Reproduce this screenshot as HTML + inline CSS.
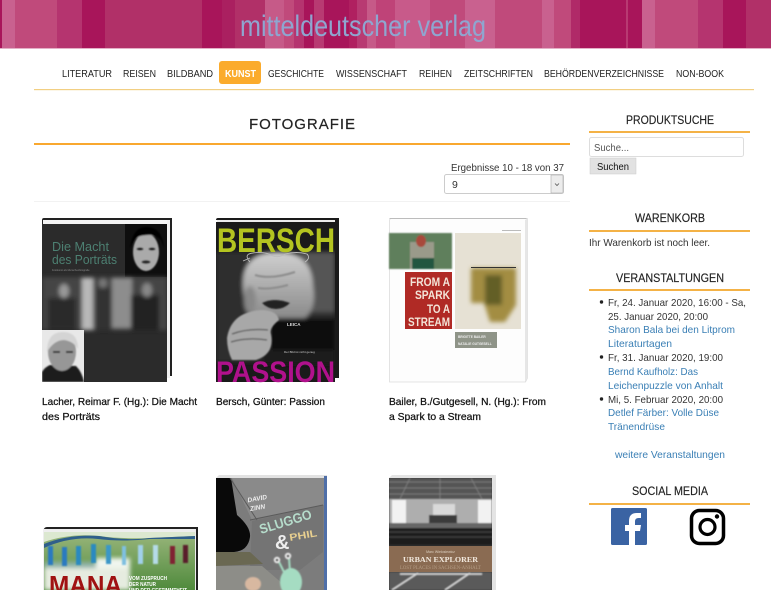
<!DOCTYPE html>
<html lang="de"><head><meta charset="utf-8"><title>Fotografie</title>
<style>
html,body{margin:0;padding:0;background:#fff;width:771px;height:590px;overflow:hidden}
svg{display:block;font-family:"Liberation Sans",sans-serif}
.n{font-size:10.5px;fill:#222}
.h{font-size:11.5px;fill:#222;stroke:#222;stroke-width:.15}
.t{font-size:10.5px;fill:#111;stroke:#111;stroke-width:.25}
.s{font-size:10.5px;fill:#333}
.b{font-size:10.5px;fill:#3a7fb5}
</style></head><body>
<svg width="771" height="590" viewBox="0 0 771 590" xmlns="http://www.w3.org/2000/svg">
<defs>
<filter id="bl" x="-10%" y="-10%" width="120%" height="120%"><feGaussianBlur stdDeviation="2"/></filter>
<filter id="bs" x="-10%" y="-10%" width="120%" height="120%"><feGaussianBlur stdDeviation="0.7"/></filter>
<linearGradient id="gm" x1="0" y1="0" x2="0" y2="1"><stop offset="0" stop-color="#9ab67c"/><stop offset="1" stop-color="#4f8a3c"/></linearGradient>
<linearGradient id="gh" x1="0" y1="0" x2="0" y2="1"><stop offset="0" stop-color="#d0d0d0"/><stop offset="1" stop-color="#8a8a8a"/></linearGradient>
<clipPath id="c1"><rect x="42" y="224" width="125" height="158"/></clipPath>
<clipPath id="c2"><rect x="216" y="222" width="119" height="160"/></clipPath>
<clipPath id="c4"><rect x="44" y="532" width="151" height="58"/></clipPath>
<clipPath id="c5"><rect x="216" y="478" width="108" height="112"/></clipPath>
<clipPath id="c6"><rect x="389" y="478" width="103" height="112"/></clipPath>
</defs>
<!-- header stripes -->
<rect width="771" height="48" fill="#b13068"/>
<g>
<rect x="0" width="2" height="48" fill="#a8155a"/><rect x="2" width="13" height="48" fill="#c9618f"/><rect x="15" width="42" height="48" fill="#c04a7b"/><rect x="57" width="25" height="48" fill="#b5346f"/><rect x="82" width="23" height="48" fill="#a8155a"/><rect x="202" width="20" height="48" fill="#a8155a"/><rect x="222" width="13" height="48" fill="#aa2060"/>
<rect x="265" width="19" height="48" fill="#c65a88"/><rect x="284" width="10" height="48" fill="#c04a7b"/><rect x="294" width="10" height="48" fill="#b5346f"/><rect x="304" width="10" height="48" fill="#a8155a"/><rect x="314" width="10" height="48" fill="#b83a72"/><rect x="324" width="25" height="48" fill="#a8155a"/><rect x="349" width="8" height="48" fill="#b02060"/><rect x="357" width="10" height="48" fill="#b83a72"/><rect x="367" width="9" height="48" fill="#c65a88"/><rect x="376" width="19" height="48" fill="#bf4378"/><rect x="395" width="35" height="48" fill="#c85a8a"/><rect x="430" width="35" height="48" fill="#c04a7b"/><rect x="465" width="30" height="48" fill="#c9618f"/><rect x="495" width="47" height="48" fill="#c04a7b"/>
<rect x="542" width="12" height="48" fill="#c9618f"/><rect x="554" width="17" height="48" fill="#c04a7b"/><rect x="571" width="9" height="48" fill="#b02a68"/><rect x="580" width="46" height="48" fill="#a8155a"/><rect x="626" width="2" height="48" fill="#b83a72"/><rect x="628" width="14" height="48" fill="#a8155a"/><rect x="642" width="13" height="48" fill="#c9618f"/><rect x="655" width="43" height="48" fill="#c04a7b"/><rect x="698" width="25" height="48" fill="#b5346f"/><rect x="723" width="23" height="48" fill="#a8155a"/><rect x="746" width="25" height="48" fill="#b13068"/>
</g>
<rect y="48" width="771" height="1" fill="#e3b0c6"/>
<text x="240" y="36" font-size="30" fill="#8ea6d0" textLength="246" lengthAdjust="spacingAndGlyphs">mitteldeutscher verlag</text>
<!-- nav -->
<rect x="219" y="61" width="42" height="23" rx="3" fill="#fbab2c"/>
<text class="n" x="62" y="77" textLength="50" lengthAdjust="spacingAndGlyphs">LITERATUR</text>
<text class="n" x="123" y="77" textLength="33" lengthAdjust="spacingAndGlyphs">REISEN</text>
<text class="n" x="167" y="77" textLength="46" lengthAdjust="spacingAndGlyphs">BILDBAND</text>
<text class="n" x="225" y="77" textLength="31" lengthAdjust="spacingAndGlyphs" style="fill:#fff;font-weight:bold">KUNST</text>
<text class="n" x="268" y="77" textLength="56" lengthAdjust="spacingAndGlyphs">GESCHICHTE</text>
<text class="n" x="336" y="77" textLength="71" lengthAdjust="spacingAndGlyphs">WISSENSCHAFT</text>
<text class="n" x="419" y="77" textLength="33" lengthAdjust="spacingAndGlyphs">REIHEN</text>
<text class="n" x="464" y="77" textLength="69" lengthAdjust="spacingAndGlyphs">ZEITSCHRIFTEN</text>
<text class="n" x="544" y="77" textLength="120" lengthAdjust="spacingAndGlyphs">BEHÖRDENVERZEICHNISSE</text>
<text class="n" x="676" y="77" textLength="48" lengthAdjust="spacingAndGlyphs">NON-BOOK</text>
<rect x="34" y="89" width="720" height="1.200" fill="#f2cf82"/>
<!-- main heading -->
<text x="249" y="129" font-size="15" fill="#222" stroke="#222" stroke-width=".2" textLength="106" lengthAdjust="spacing">FOTOGRAFIE</text>
<rect x="34" y="143" width="536" height="2" fill="#f9a82f"/>
<text class="s" x="451" y="171" textLength="113" lengthAdjust="spacingAndGlyphs">Ergebnisse 10 - 18 von 37</text>
<rect x="444.500" y="174.500" width="119" height="19" rx="2" fill="#fff" stroke="#ccc"/>
<rect x="551" y="175" width="12" height="18" fill="#ececec" stroke="#aaa" stroke-width=".6"/>
<path d="M555 183.500l2 2 2-2" fill="none" stroke="#555" stroke-width=".8"/>
<text class="s" x="452" y="188">9</text>
<rect x="34" y="201" width="536" height="1" fill="#f2f2f2"/>

<!-- book 1 -->
<g>
<path d="M42 224V220q0-2 2-2H172V376H170V220H44V224z" fill="#222"/>
<rect x="43" y="220" width="127" height="4" fill="#f4f4f4"/>
<rect x="167" y="220" width="3" height="158" fill="#efefef"/>
<rect x="42" y="224" width="125" height="158" fill="#2b2b2b"/>
<g clip-path="url(#c1)">
<rect x="125" y="224" width="42" height="53" fill="#0e0e0e"/>
<g filter="url(#bs)"><ellipse cx="146" cy="252" rx="13" ry="19" fill="#aaa"/><path d="M130 248q3-22 17-21 15 0 17 21l-3-8q-6-6-13-5-10 0-14 5z" fill="#050505"/><ellipse cx="140" cy="249" rx="3.500" ry="1.500" fill="#111"/><ellipse cx="152" cy="249" rx="3.500" ry="1.500" fill="#111"/><ellipse cx="146" cy="262" rx="4.500" ry="1.800" fill="#222"/></g>
<g filter="url(#bl)"><rect x="42" y="277" width="125" height="53" fill="#444"/><rect x="82" y="278" width="11" height="52" fill="#b8b8b8"/><rect x="112" y="278" width="20" height="50" fill="#8d8d8d"/><rect x="48" y="298" width="28" height="32" fill="#2c2c2c"/><ellipse cx="64" cy="291" rx="5" ry="7" fill="#999"/><rect x="97" y="288" width="14" height="42" fill="#333"/><ellipse cx="103" cy="283" rx="4" ry="5" fill="#777"/><rect x="131" y="295" width="28" height="35" fill="#222"/><ellipse cx="147" cy="290" rx="5" ry="7" fill="#888"/></g>
<rect x="42" y="330" width="42" height="52" fill="#e8e8e8"/>
<g filter="url(#bs)"><path d="M42 382V372q3-5 8-7l26 1q6 6 8 16z" fill="#1c1c1c"/><ellipse cx="62" cy="352" rx="14" ry="19" fill="#979797"/><path d="M47 352q0-20 16-20 15 0 15 17-5-8-14-9-10 0-17 12z" fill="#d4d4d4"/><rect x="53" y="351" width="7" height="2" fill="#333"/><rect x="66" y="351" width="7" height="2" fill="#333"/></g>
</g>
<text x="52" y="251" font-size="13" fill="#4d8072" textLength="57" lengthAdjust="spacingAndGlyphs">Die Macht</text>
<text x="52" y="264" font-size="13" fill="#4d8072" textLength="65" lengthAdjust="spacingAndGlyphs">des Porträts</text>
<text x="52" y="271" font-size="2.500" fill="#888">Fotokunst als Menschenfotografie</text>
</g>
<text class="t" x="42" y="405" textLength="155" lengthAdjust="spacingAndGlyphs">Lacher, Reimar F. (Hg.): Die Macht</text>
<text class="t" x="42" y="420" textLength="58" lengthAdjust="spacingAndGlyphs">des Porträts</text>

<!-- book 2 -->
<g>
<path d="M216 222V220q0-2 2-2H339V378H335V220H216z" fill="#1a1a1a"/>
<rect x="217" y="220" width="118" height="3" fill="#ececec"/>
<rect x="216" y="222" width="119" height="160" fill="#1a1a1a"/>
<g clip-path="url(#c2)">
<g filter="url(#bl)"><rect x="216" y="252" width="119" height="110" fill="#2e2e2e"/><rect x="300" y="252" width="35" height="60" fill="#555"/><path d="M243 285q-1-32 35-33 34 1 35 34 4 22-8 32H255q-12-10-12-33z" fill="url(#gh)"/><ellipse cx="250" cy="300" rx="6" ry="14" fill="#888"/><rect x="270" y="318" width="65" height="32" fill="#0c0c0c"/><rect x="262" y="350" width="73" height="14" fill="#1c1c1c"/></g>
<g filter="url(#bs)"><path d="M227 338q4-26 34-28 16 0 18 10-10 8-8 14 4 20-15 26h-24q-5-10-5-22z" fill="#a8a8a8"/><path d="M262 303q12-6 28 0-6 6-14 6-8 0-14-6z" fill="#222"/><path d="M232 334q16-6 36-4M231 342q16-5 36-2" stroke="#555" stroke-width="1.300" fill="none"/><path d="M255 275q16 5 40-3M258 288q12 2 30-3" stroke="#8c8c8c" stroke-width="2" fill="none"/></g>
<path d="M250 262q-7-8 3-9 12-2 20 3 6 2 12-2 12-3 22 0 4 4-2 8M250 258l-7 3" fill="none" stroke="#bbb" stroke-width=".9"/>
</g>
<text x="287" y="326" font-size="4.500" fill="#ddd" font-weight="bold">LEICA</text>
<text x="284" y="353" font-size="3" fill="#ccc">Der Bild ist nicht genug</text>
<text x="217" y="252" font-size="34" font-weight="bold" fill="#b4c420" textLength="118" lengthAdjust="spacingAndGlyphs">BERSCH</text>
<text x="216" y="382" font-size="30" font-weight="bold" fill="#b0118c" textLength="119" lengthAdjust="spacingAndGlyphs">PASSION</text>
</g>
<text class="t" x="216" y="405" textLength="109" lengthAdjust="spacingAndGlyphs">Bersch, Günter: Passion</text>

<!-- book 3 -->
<g>
<path d="M389.500 220l1-1.500H527.500V378l-2 4H389.500z" fill="#fdfdfd" stroke="#dcdcdc" stroke-width=".8"/>
<path d="M525 220l2.500-1.500V378l-2.500 4z" fill="#e6e6e6"/>
<rect x="389.500" y="218" width="137" height="1" fill="#bcbcbc"/>
<rect x="502" y="230" width="19" height="1" fill="#bbb"/>
<g filter="url(#bs)"><rect x="389" y="233" width="63" height="36" fill="#5f7f5c"/><rect x="410" y="242" width="24" height="27" fill="#9a9a8a"/><ellipse cx="421" cy="241" rx="5" ry="6" fill="#a84a3a"/><rect x="412" y="258" width="22" height="11" fill="#21573f"/></g>
<rect x="455" y="233" width="66" height="96" fill="#e6e1d4"/>
<g filter="url(#bl)"><path d="M471 268H516V305L505 322H490L484 303H471z" fill="#a38d42"/><rect x="485" y="275" width="17" height="30" fill="#635e28"/></g>
<rect x="471" y="267" width="45" height="1" fill="#333"/>
<rect x="405" y="272" width="47" height="57" fill="#b02a25"/>
<g font-size="12" font-weight="bold" fill="#f3e4d8">
<text x="410" y="286" textLength="40" lengthAdjust="spacingAndGlyphs">FROM A</text><text x="415" y="299" textLength="35" lengthAdjust="spacingAndGlyphs">SPARK</text><text x="427" y="313" textLength="23" lengthAdjust="spacingAndGlyphs">TO A</text><text x="408" y="326" textLength="42" lengthAdjust="spacingAndGlyphs">STREAM</text></g>
<rect x="455" y="332" width="42" height="16" fill="#8f9488"/>
<text x="458" y="338" font-size="3.200" fill="#eee" font-weight="bold">BRIGITTE BAILER</text>
<text x="458" y="345" font-size="3.200" fill="#eee" font-weight="bold">NATALIE GUTGESELL</text>
</g>
<text class="t" x="389" y="405" textLength="157" lengthAdjust="spacingAndGlyphs">Bailer, B./Gutgesell, N. (Hg.): From</text>
<text class="t" x="389" y="420" textLength="92" lengthAdjust="spacingAndGlyphs">a Spark to a Stream</text>

<!-- book 4 -->
<g>
<path d="M43 531q1-4 4-4H198V590H196V529H47z" fill="#222"/>
<rect x="43" y="529" width="153" height="61" fill="#eee"/>
<rect x="44" y="532" width="151" height="58" fill="url(#gm)"/>
<g clip-path="url(#c4)">
<path d="M44 532H195V536L150 538q-30 1-50-2-30-3-56 6z" fill="#dce8d0"/>
<path d="M44 544q25-10 55-8 30 5 50 2l46-2v3H150q-28 3-52 0-28-3-54 9z" fill="#2f5f8a"/>
<g filter="url(#bl)"><rect x="44" y="562" width="60" height="28" fill="#8fb2a8"/><rect x="96" y="558" width="34" height="32" fill="#f0f5ee"/><rect x="44" y="568" width="85" height="22" fill="#e6ece0"/></g>
<g filter="url(#bs)"><rect x="48" y="546" width="5" height="19" fill="#2c7ac0"/><rect x="62" y="547" width="5" height="19" fill="#2c7ac0"/><rect x="76" y="546" width="5" height="19" fill="#2c8ac0"/><rect x="91" y="544" width="5" height="19" fill="#2c8ac0"/><rect x="106" y="545" width="5" height="19" fill="#3a97c7"/><rect x="122" y="546" width="4" height="19" fill="#7fc0e0"/><rect x="138" y="545" width="5" height="19" fill="#a0d0ea"/><rect x="153" y="545" width="5" height="19" fill="#b5dbe8"/><rect x="170" y="546" width="5" height="18" fill="#802030"/><rect x="183" y="545" width="5" height="18" fill="#5a1c2a"/></g>
<text x="49" y="594" font-size="26" font-weight="bold" fill="#a01212" textLength="73" lengthAdjust="spacingAndGlyphs">MANA</text>
<g font-size="5" fill="#fff" font-weight="bold"><text x="129" y="580" textLength="38" lengthAdjust="spacingAndGlyphs">VOM ZUSPRUCH</text><text x="129" y="586" textLength="27" lengthAdjust="spacingAndGlyphs">DER NATUR</text><text x="129" y="592" textLength="58" lengthAdjust="spacingAndGlyphs">UND DER GESTIMMTHEIT</text></g>
</g>
</g>

<!-- book 5 -->
<g>
<path d="M216 478l3-3H327V590H216z" fill="#e2e2e2"/>
<rect x="324" y="476" width="3" height="114" fill="#4f6fa8"/>
<rect x="216" y="478" width="108" height="112" fill="#7c7c7c"/>
<g clip-path="url(#c5)">
<path d="M232 478H324V505L252 520z" fill="#8a8a8a"/>
<path d="M252 521L323 505V552L300 570H250z" fill="#747474"/>
<path d="M216 478H231L237 515q14 12 13 22-2 14-16 15h-18z" fill="#090909"/>
<path d="M230 478L257 520M250 520L323 505" stroke="#5b5b5b" stroke-width="1" fill="none"/>
<path d="M216 552H250L263 564 216 566z" fill="#6a6852"/>
<path d="M216 566H262L290 590H216z" fill="#8d8d88"/>
<g transform="rotate(-10 250 503)" font-size="6.500" fill="#eee" font-weight="bold" font-style="italic"><text x="248" y="502">DAVID</text><text x="249" y="511">ZINN</text></g>
<text x="0" y="0" font-size="13.500" font-weight="bold" fill="#b6dccb" transform="translate(261 534) rotate(-17)" textLength="54" lengthAdjust="spacingAndGlyphs">SLUGGO</text>
<text x="275" y="549" font-size="20" font-weight="bold" fill="#eee">&amp;</text>
<text x="0" y="0" font-size="10" font-weight="bold" fill="#e8cf8f" transform="translate(290 541) rotate(-10)" textLength="28" lengthAdjust="spacingAndGlyphs">PHIL</text>
<g filter="url(#bs)"><ellipse cx="291" cy="582" rx="11" ry="14" fill="#a5dcc2"/><path d="M279 562l6 12M289 558l1 14" stroke="#a5dcc2" stroke-width="2"/><circle cx="277" cy="560" r="3.200" fill="#eee"/><circle cx="288" cy="556" r="3.200" fill="#eee"/><circle cx="277" cy="560" r="1.300" fill="#222"/><circle cx="288" cy="556" r="1.300" fill="#222"/><ellipse cx="253" cy="584" rx="8" ry="7" fill="#d8b8a0"/></g>
</g>
</g>

<!-- book 6 -->
<g>
<path d="M389 478l3-3H496V590H389z" fill="#e4e4e4"/>
<rect x="389" y="478" width="103" height="112" fill="#333"/>
<g clip-path="url(#c6)" filter="url(#bs)">
<rect x="389" y="478" width="103" height="21" fill="#555"/>
<path d="M389 482H492M389 488H492M389 494H492M410 478L400 499M471 478L482 499M440 478V499" stroke="#888" stroke-width=".7"/>
<rect x="389" y="499" width="103" height="26" fill="#aeaeae"/>
<rect x="392" y="500" width="14" height="25" fill="#f2f2f2"/><rect x="478" y="500" width="14" height="25" fill="#f2f2f2"/>
<rect x="433" y="504" width="22" height="11" fill="#d9d9d9"/><rect x="429" y="515" width="28" height="8" fill="#3a3a3a"/>
<rect x="389" y="523" width="103" height="5" fill="#666"/>
<rect x="389" y="528" width="103" height="17" fill="#1c1c1c"/>
<path d="M389 532H492M389 537H492" stroke="#555" stroke-width=".8"/>
<rect x="389" y="572" width="103" height="18" fill="#5a5a5a"/><path d="M392 590L418 573M445 590L470 573M400 574H482" stroke="#ddd" stroke-width="1.500"/>
</g>
<rect x="389" y="546" width="103" height="26" fill="#8a6b52"/>
<text x="440.500" y="553" font-size="3.500" fill="#dcd0c0" text-anchor="middle">Marc Wielosiewicz</text>
<text x="403" y="562" font-size="7.500" font-weight="bold" fill="#f2e9de" font-family="Liberation Serif" textLength="75" lengthAdjust="spacingAndGlyphs">URBAN EXPLORER</text>
<text x="400" y="569" font-size="5" fill="#b49c84" font-family="Liberation Serif" textLength="81" lengthAdjust="spacingAndGlyphs">LOST PLACES IN SACHSEN-ANHALT</text>
</g>

<!-- sidebar -->
<text class="h" x="626" y="124" textLength="88" lengthAdjust="spacingAndGlyphs">PRODUKTSUCHE</text>
<rect x="589" y="131" width="161" height="2" fill="#f4b246"/>
<rect x="589.500" y="137.500" width="154" height="19" rx="2" fill="#fff" stroke="#ddd"/>
<text class="s" x="594" y="151" style="fill:#555" textLength="35" lengthAdjust="spacingAndGlyphs">Suche...</text>
<rect x="590" y="158" width="46" height="16" fill="#e2e2e2" stroke="#ccc" stroke-width=".5"/>
<text class="s" x="597" y="170" style="fill:#111" textLength="32" lengthAdjust="spacingAndGlyphs">Suchen</text>

<text class="h" x="635" y="222" textLength="70" lengthAdjust="spacingAndGlyphs">WARENKORB</text>
<rect x="589" y="230" width="161" height="2" fill="#f4b246"/>
<text class="s" x="589" y="246" textLength="121" lengthAdjust="spacingAndGlyphs">Ihr Warenkorb ist noch leer.</text>

<text class="h" x="616" y="282" textLength="108" lengthAdjust="spacingAndGlyphs">VERANSTALTUNGEN</text>
<rect x="589" y="289" width="161" height="2" fill="#f4b246"/>
<circle cx="601.500" cy="302" r="1.700" fill="#222"/><circle cx="601.500" cy="357" r="1.700" fill="#222"/><circle cx="601.500" cy="399" r="1.700" fill="#222"/>
<text class="s" x="608" y="306" textLength="138" lengthAdjust="spacingAndGlyphs">Fr, 24. Januar 2020, 16:00 - Sa,</text>
<text class="s" x="608" y="320" textLength="100" lengthAdjust="spacingAndGlyphs">25. Januar 2020, 20:00</text>
<text class="b" x="608" y="333" textLength="127" lengthAdjust="spacingAndGlyphs">Sharon Bala bei den Litprom</text>
<text class="b" x="608" y="347" textLength="64" lengthAdjust="spacingAndGlyphs">Literaturtagen</text>
<text class="s" x="608" y="361" textLength="115" lengthAdjust="spacingAndGlyphs">Fr, 31. Januar 2020, 19:00</text>
<text class="b" x="608" y="375" textLength="90" lengthAdjust="spacingAndGlyphs">Bernd Kaufholz: Das</text>
<text class="b" x="608" y="389" textLength="115" lengthAdjust="spacingAndGlyphs">Leichenpuzzle von Anhalt</text>
<text class="s" x="608" y="403" textLength="115" lengthAdjust="spacingAndGlyphs">Mi, 5. Februar 2020, 20:00</text>
<text class="b" x="608" y="416" textLength="111" lengthAdjust="spacingAndGlyphs">Detlef Färber: Volle Düse</text>
<text class="b" x="608" y="430" textLength="57" lengthAdjust="spacingAndGlyphs">Tränendrüse</text>
<text class="b" x="615" y="458" textLength="110" lengthAdjust="spacingAndGlyphs">weitere Veranstaltungen</text>

<text class="h" x="632" y="495" textLength="76" lengthAdjust="spacingAndGlyphs">SOCIAL MEDIA</text>
<rect x="589" y="503" width="161" height="2" fill="#f4b246"/>
<rect x="611" y="508" width="36" height="37" rx="1.500" fill="#3a63a3"/>
<path d="M635 545V531H640L641 525H635V521.500Q635 518 638.500 518H641V513H637Q629 513 629 521V525H625V531H629V545z" fill="#fff"/>
<rect x="691.500" y="510.500" width="32" height="33" rx="8" fill="none" stroke="#000" stroke-width="3.500"/>
<circle cx="707.500" cy="527" r="7.500" fill="none" stroke="#000" stroke-width="3.200"/>
<circle cx="717" cy="516.500" r="2.200" fill="#000"/>
</svg>
</body></html>
